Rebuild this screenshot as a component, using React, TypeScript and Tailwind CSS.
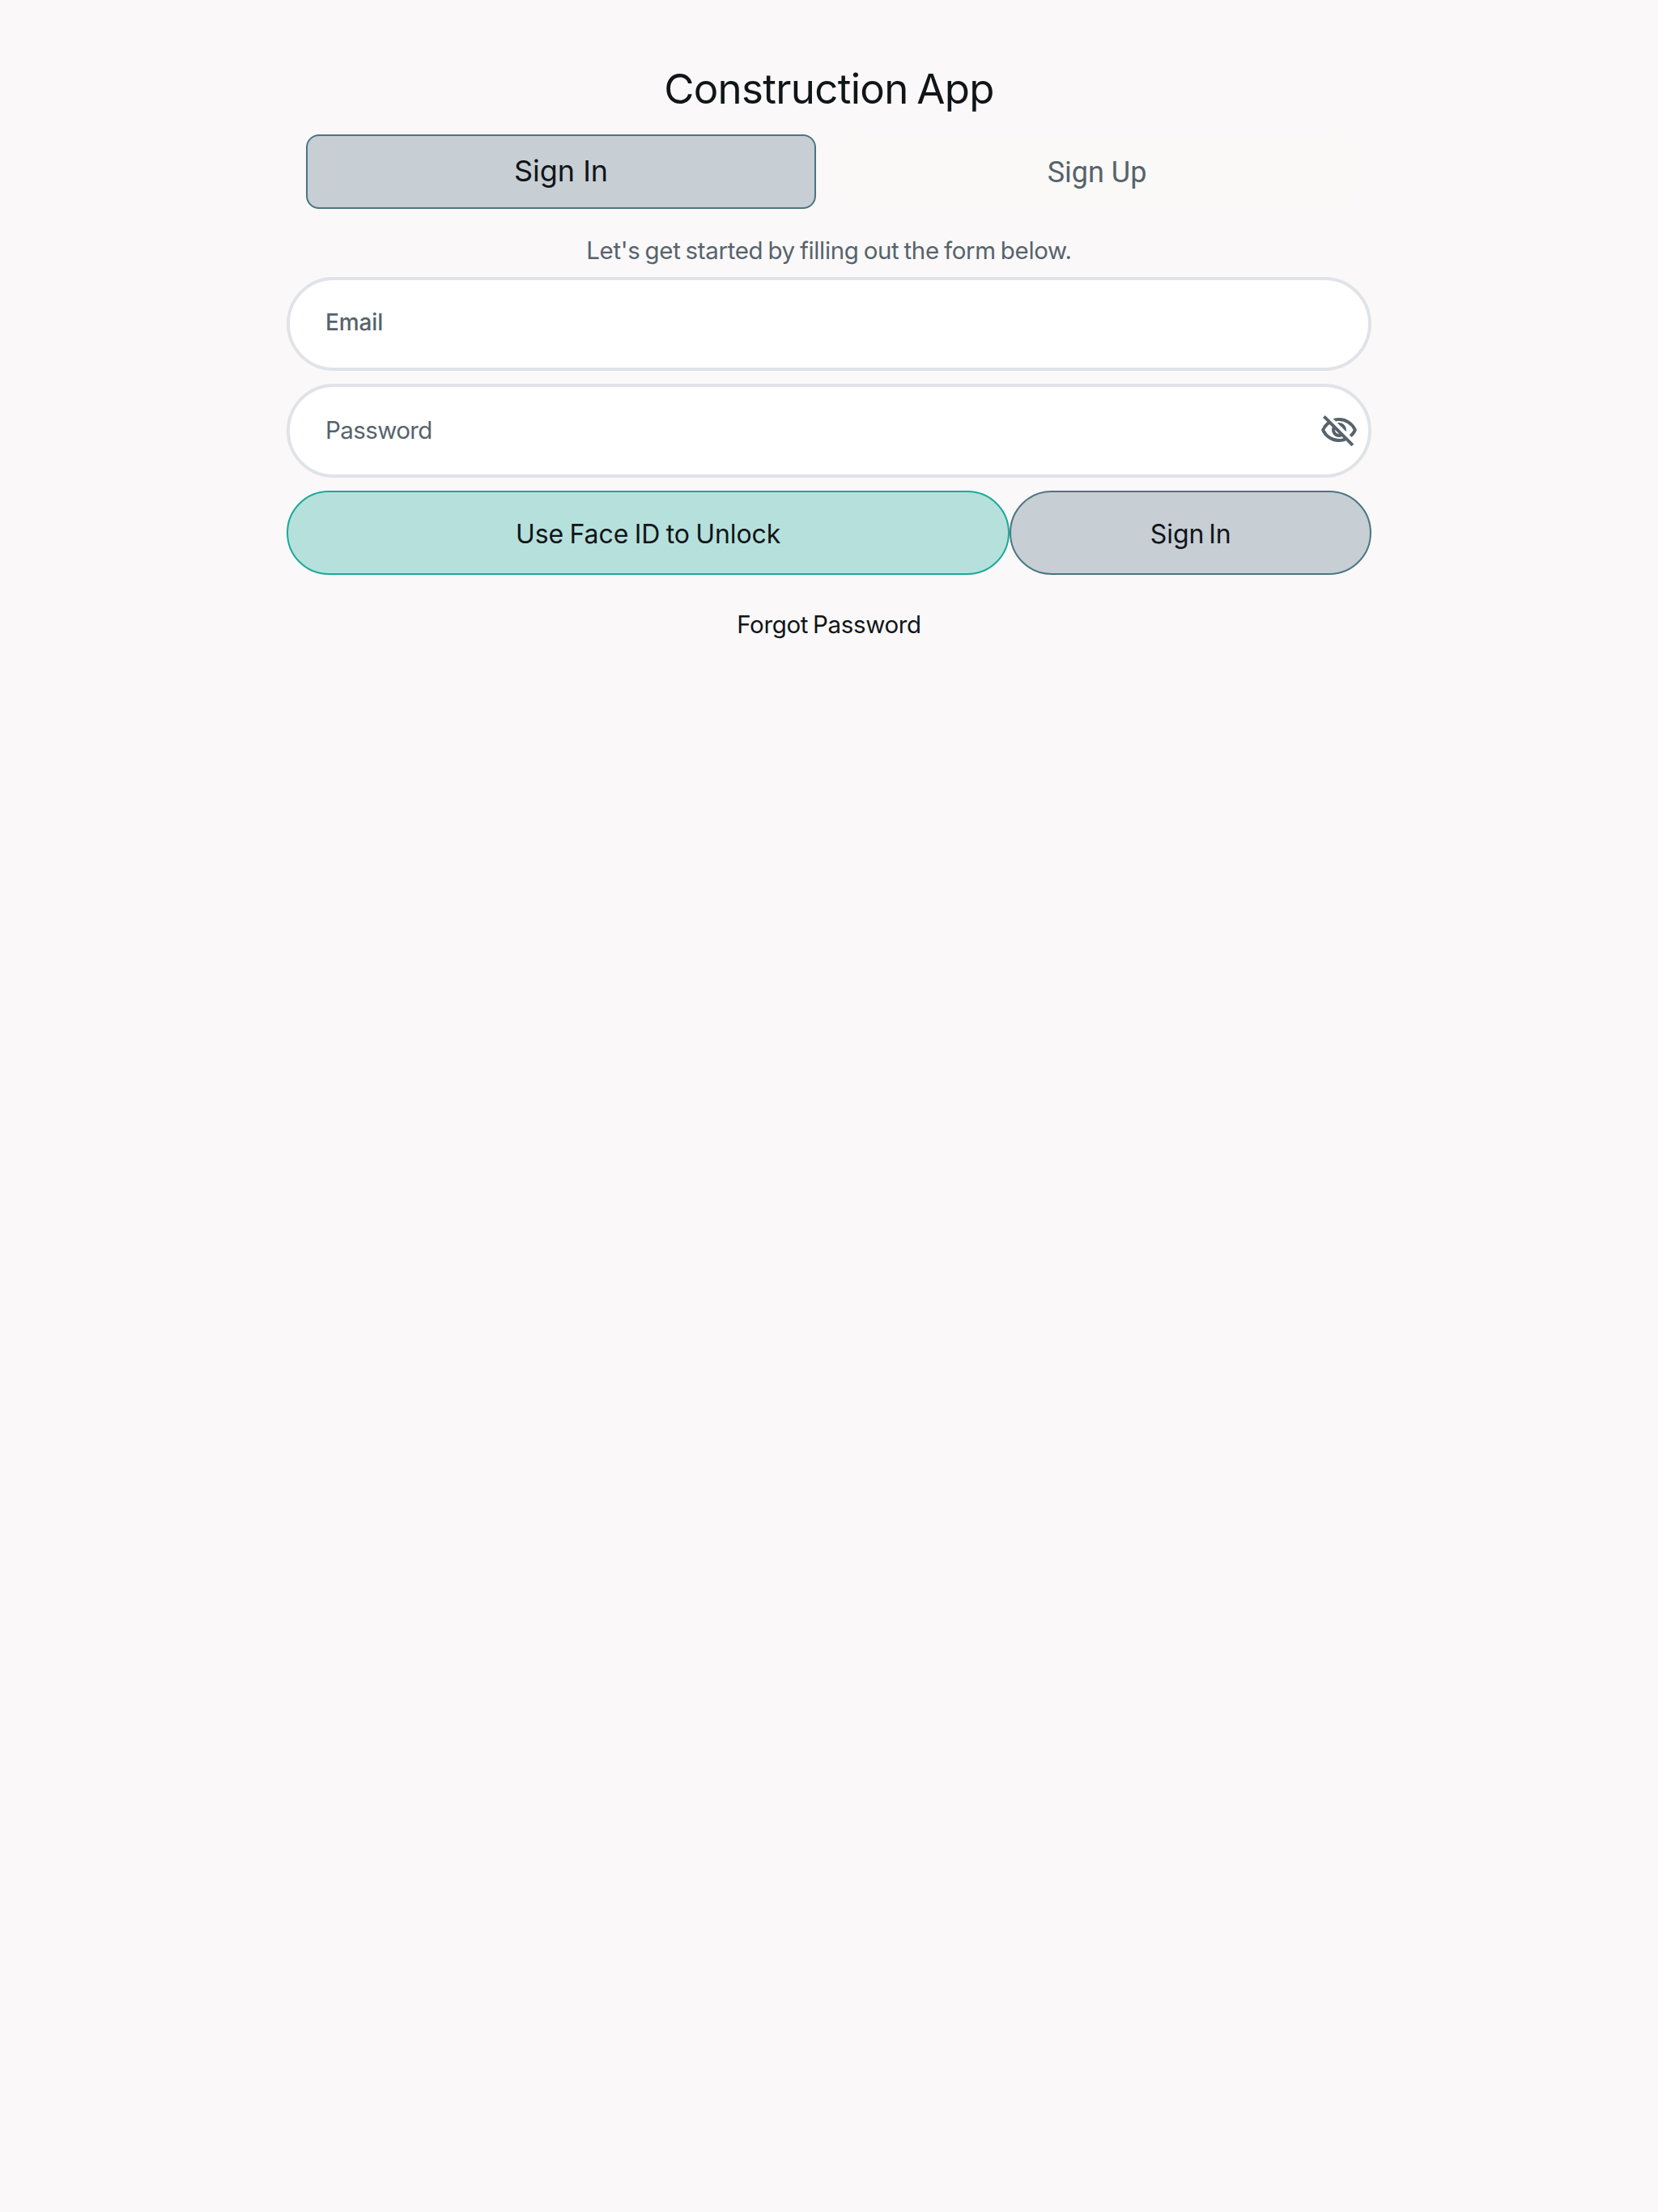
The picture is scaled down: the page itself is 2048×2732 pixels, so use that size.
import { useState } from "react";
import { MdOutlineVisibility, MdOutlineVisibilityOff } from "react-icons/md";

export default function App() {
  const [showPassword, setShowPassword] = useState(false);

  return (
    <main className="min-h-screen bg-[#faf8f9] font-['Inter',sans-serif] text-[#101518]">
      <div className="mx-auto flex w-[1340px] flex-col pt-[78px]">
        <h1 className="h-16 text-center text-[51px] leading-[64px] tracking-[-0.7px] [word-spacing:-3px]">
          Construction App
        </h1>

        <div className="mt-6 grid grid-cols-2 gap-8 px-6" role="tablist">
          <button
            role="tab"
            aria-selected="true"
            className="h-[92px] rounded-2xl border-2 border-[#4b7583] bg-[#c7ced4] pb-0.5 text-[36px] leading-[44px]"
          >
            Sign In
          </button>
          <button
            role="tab"
            aria-selected="false"
            className="h-[92px] rounded-2xl bg-[#faf9f7] pt-0.5 font-['Roboto',sans-serif] text-[36px] leading-[44px] text-[#57636c]"
          >
            Sign Up
          </button>
        </div>

        <p className="mt-[31px] h-10 text-center text-[29.5px] leading-10 tracking-[-0.35px] text-[#57636c] [word-spacing:-1.8px]">
          Let's get started by filling out the form below.
        </p>

        <div className="mt-[13px] flex h-[116px] items-center rounded-full border-4 border-[#e0e3e7] bg-white px-11 text-[28px] font-medium tracking-[-0.1px] text-[#57636c]">
          <span className="pb-1">Email</span>
        </div>

        <div className="mt-4 flex h-[116px] items-center justify-between rounded-full border-4 border-[#e0e3e7] bg-white pr-3 pl-11 text-[29.5px] tracking-[-0.6px] text-[#57636c]">
          <span className="pb-0.5">Password</span>
          <button aria-label="Toggle password" onClick={() => setShowPassword(!showPassword)}>
            {showPassword ? <MdOutlineVisibility size={48} /> : <MdOutlineVisibilityOff size={48} />}
          </button>
        </div>

        <div className="mt-4 grid grid-cols-[2fr_1fr] text-[32px] leading-10 tracking-[-0.1px]">
          <button className="h-[104px] rounded-full border-2 border-[#18aa99] bg-[#b6e0dc] pt-1 [word-spacing:-1.4px]">
            Use Face ID to Unlock
          </button>
          <button className="h-[104px] rounded-full border-2 border-[#4b7583] bg-[#c7ced4] pt-1 [word-spacing:-3px]">
            Sign In
          </button>
        </div>

        <a href="#" className="mt-[41px] self-center text-[29.5px] leading-10 tracking-[-0.35px] [word-spacing:-2px]">
          Forgot Password
        </a>
      </div>
    </main>
  );
}
